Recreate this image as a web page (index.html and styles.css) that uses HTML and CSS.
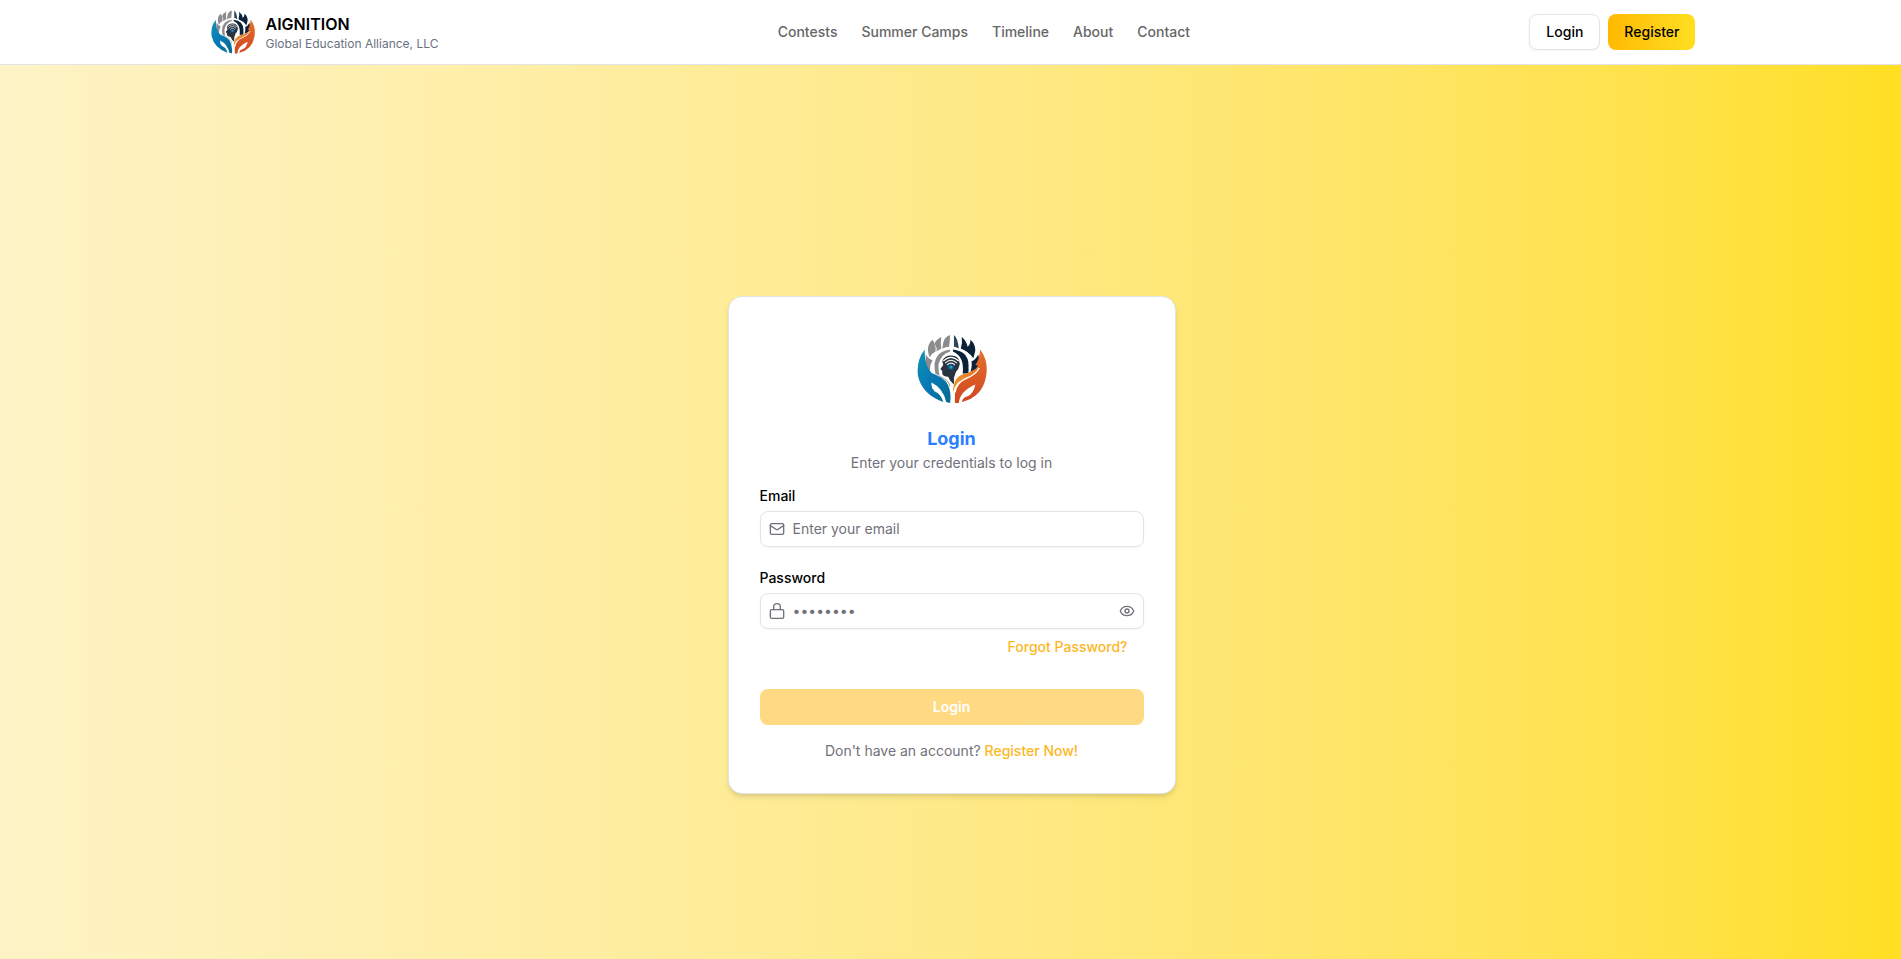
FILE: index.html
```html
<!DOCTYPE html>
<html lang="en">
<head>
<meta charset="utf-8">
<meta name="viewport" content="width=device-width, initial-scale=1">
<title>AIGNITION - Login</title>
<link rel="stylesheet" href="styles.css">
</head>
<body>
<svg class="defs" width="0" height="0" aria-hidden="true">
  <defs>
    <linearGradient id="blue" x1="0" y1="0" x2="1" y2="1"><stop offset="0" stop-color="#0e93b8"/><stop offset=".5" stop-color="#0878b4"/><stop offset="1" stop-color="#056a8f"/></linearGradient>
    <linearGradient id="orange" x1="0" y1="0" x2="0" y2="1"><stop offset="0" stop-color="#e8702a"/><stop offset="1" stop-color="#cf4722"/></linearGradient>
    <linearGradient id="amber" x1="0" y1="1" x2="1" y2="0"><stop offset="0" stop-color="#f09a28"/><stop offset="1" stop-color="#e06a28"/></linearGradient>
    <symbol id="logo" viewBox="0 0 72 72">
      <g fill="#8c8c8e">
        <path d="M16 6C11 10 10 16 13 24Q15 20 19 18Q20 12 16 6Z"/>
        <path d="M25 3Q19 6 18 10Q21 14 20 18L25 15Q24 9 25 3Z"/>
        <path d="M34 1Q28 3 27 9L26 15Q30 13 33 13Q34 7 34 1Z"/>
        <path d="M9 21Q8 27 10 34L13 38Q13 32 16 27Q11 25 9 21Z"/>
        <path d="M34 16Q19 18 18 32Q18 37 19 41L23 43Q22 37 22 32Q24 21 34 18Z"/>
      </g>
      <g fill="#0b2239">
        <path fill="#31465a" d="M38 1Q42 4 43 15Q40 13 38 13Z"/>
        <path d="M46 3Q51 7 52 13Q55 11 55 6Q60 10 60 17L58 25Q53 18 45 15Q47 9 46 3Z"/>
        <path d="M63 21Q65 28 63 35L55 39Q57 32 56 28Q60 27 63 21Z"/>
        <path d="M37 16Q53 18 53 32L53 40L47 41Q49 23 37 18Z"/>
      </g>
      <path fill="#29323f" d="M26 28Q28 22 35 22Q44 22 44 31Q43 36 40 39L38 45L38 52Q34 49 32 44Q27 44 26 41L26 38L24 36L27 32Z"/>
      <path fill="none" stroke="#fff" stroke-width="1.1" d="M27 28Q35 20 43 28M29 30Q35 24 41 30M31 32Q35 28 39 32"/>
      <circle cx="35" cy="34" r="3.5" fill="#174c70"/><circle cx="35" cy="34" r="1.7" fill="#1ca2d0"/>
      <path fill="url(#blue)" d="M8 16Q-1 27 1 43Q5 62 27 70Q25 62 18 59Q14 55 15 50Q27 56 30 70L34 71Q36 58 30 49Q24 43 15 40Q7 31 8 16Z"/>
      <path fill="none" stroke="#a2aaae" stroke-width="1.2" d="M22 43Q33 47 34 54"/>
      <path fill="url(#orange)" d="M65 16Q64 27 60 32L64 33Q60 39 52 42Q42 47 39 61L39 71H43Q44 59 60 52Q58 62 52 64Q47 65 46 70Q67 65 71 44Q74 28 65 16Z"/>
      <path fill="url(#amber)" d="M66 26Q63 38 49 41Q37 44 37 60Q40 48 51 45Q64 41 66 26Z"/>
      <path fill="none" stroke="#fff" stroke-width="1.4" d="M39 60Q41 49 52 45Q60 42 64 35"/>
    </symbol>
  </defs>
</svg>
<header class="topbar">
  <div class="topbar-inner">
    <a class="brand" href="#">
      <svg class="brand-logo" aria-hidden="true"><use href="#logo"/></svg>
      <span class="brand-text"><strong class="brand-name">AIGNITION</strong><span class="brand-sub">Global Education Alliance, LLC</span></span>
    </a>
    <nav class="nav">
      <a href="#">Contests</a><a href="#">Summer Camps</a><a href="#">Timeline</a><a href="#">About</a><a href="#">Contact</a>
    </nav>
    <div class="actions">
      <button class="btn btn-outline" type="button">Login</button>
      <button class="btn btn-gradient" type="button">Register</button>
    </div>
  </div>
</header>
<main class="page">
  <form class="card">
    <svg class="card-logo" aria-hidden="true"><use href="#logo"/></svg>
    <h1 class="title">Login</h1>
    <p class="subtitle">Enter your credentials to log in</p>
    <div class="field">
      <label for="email">Email</label>
      <div class="control">
        <svg class="icon" viewBox="0 0 24 24" aria-hidden="true"><rect x="2" y="4" width="20" height="16" rx="2"/><path d="m22 7-8.97 5.7a1.94 1.94 0 0 1-2.06 0L2 7"/></svg>
        <input id="email" type="email" placeholder="Enter your email">
      </div>
    </div>
    <div class="field">
      <label for="password">Password</label>
      <div class="control">
        <svg class="icon" viewBox="0 0 24 24" aria-hidden="true"><path d="M7 10V6a5 5 0 0 1 10 0v4"/><rect x="2" y="10" width="20" height="13" rx="2"/></svg>
        <input id="password" type="password" placeholder="••••••••">
        <button class="reveal" type="button" aria-label="Show password"><svg class="icon" viewBox="0 0 24 24" aria-hidden="true"><path d="M2.062 12.348a1 1 0 0 1 0-.696 10.75 10.75 0 0 1 19.876 0 1 1 0 0 1 0 .696 10.75 10.75 0 0 1-19.876 0"/><circle cx="12" cy="12" r="3"/></svg></button>
      </div>
    </div>
    <a class="link forgot" href="#">Forgot Password?</a>
    <button class="btn submit" type="submit" disabled>Login</button>
    <p class="signup">Don't have an account? <a class="link" href="#">Register Now!</a></p>
  </form>
</main>
</body>
</html>
```
FILE: styles.css
```css
* { box-sizing: border-box; }
body {
  margin: 0;
  min-height: 100vh;
  display: flex;
  flex-direction: column;
  font-family: Inter, "Liberation Sans", sans-serif;
  font-size: 14px;
  line-height: 20px;
  color: #000;
}
a { color: inherit; text-decoration: none; }
button, input { font: inherit; color: inherit; }
.defs { position: absolute; }
.topbar { background: #fff; border-bottom: 1px solid #e4e4e7; }
.topbar-inner {
  max-width: 1536px;
  height: 64px;
  margin: 0 auto;
  padding: 0 23px 0 24px;
  display: flex;
  align-items: center;
  justify-content: space-between;
}
.brand { display: flex; align-items: center; gap: 11px; padding-left: 4px; }
.brand-logo { width: 44px; height: 44px; }
.brand-text { display: flex; flex-direction: column; }
.brand-name { font-size: 16px; font-weight: 600; line-height: 24px; }
.brand-sub { font-size: 12px; line-height: 16px; color: #6a7282; }
.nav { display: flex; gap: 24px; font-weight: 500; color: #666; }
.actions { display: flex; gap: 8px; }
.btn {
  height: 36px;
  padding: 0 16px;
  border: 0;
  border-radius: 8px;
  font-weight: 500;
}
.btn-outline { background: #fff; border: 1px solid #e4e4e7; box-shadow: 0 1px 2px rgba(0, 0, 0, .05); }
.btn-gradient { background: linear-gradient(to right in oklab, #ffb900, #ffdf20); }
.page {
  flex: 1;
  display: flex;
  align-items: center;
  justify-content: center;
  padding: 98px 16px 32px 18px;
  background: linear-gradient(to right in oklab, #fef3c6, #ffdf20);
}
.card {
  width: 448px;
  max-width: 100%;
  padding: 32px 31px;
  display: flex;
  flex-direction: column;
  background: #fff;
  border: 1px solid #e4e4e7;
  border-radius: 14px;
  box-shadow: 0 4px 6px -1px rgba(0, 0, 0, .1), 0 2px 4px -2px rgba(0, 0, 0, .1);
}
.card-logo { width: 70px; height: 70px; margin: 5px auto 23px; }
.title { margin: 0; font-size: 18px; line-height: 24px; font-weight: 700; text-align: center; color: #2b7fff; }
.subtitle { margin: 0; line-height: 24px; text-align: center; color: #71717a; }
.field { margin-top: 10px; }
.field + .field { margin-top: 20px; }
.field label { display: block; line-height: 22px; font-weight: 500; }
.control {
  display: flex;
  align-items: center;
  gap: 8px;
  height: 36px;
  margin-top: 4px;
  padding: 0 8px;
  border: 1px solid #e4e4e7;
  border-radius: 8px;
  box-shadow: 0 1px 2px rgba(0, 0, 0, .05);
}
.control input { flex: 1; min-width: 0; padding: 0; border: 0; outline: 0; background: none; }
.control input::placeholder { color: #71717a; opacity: 1; }
.icon { flex: none; display: block; width: 16px; height: 16px; fill: none; stroke: #71717a; stroke-width: 2; stroke-linecap: round; stroke-linejoin: round; }
.reveal { padding: 0; border: 0; background: none; }
.link { font-weight: 500; color: #fdb71f; }
.forgot { align-self: flex-end; margin: 8px 16px 32px 0; }
.submit { color: #fff; font-weight: 600; background: #ffb60a; opacity: .5; }
.signup { margin: 16px 0 0; text-align: center; color: #71717a; }
```
